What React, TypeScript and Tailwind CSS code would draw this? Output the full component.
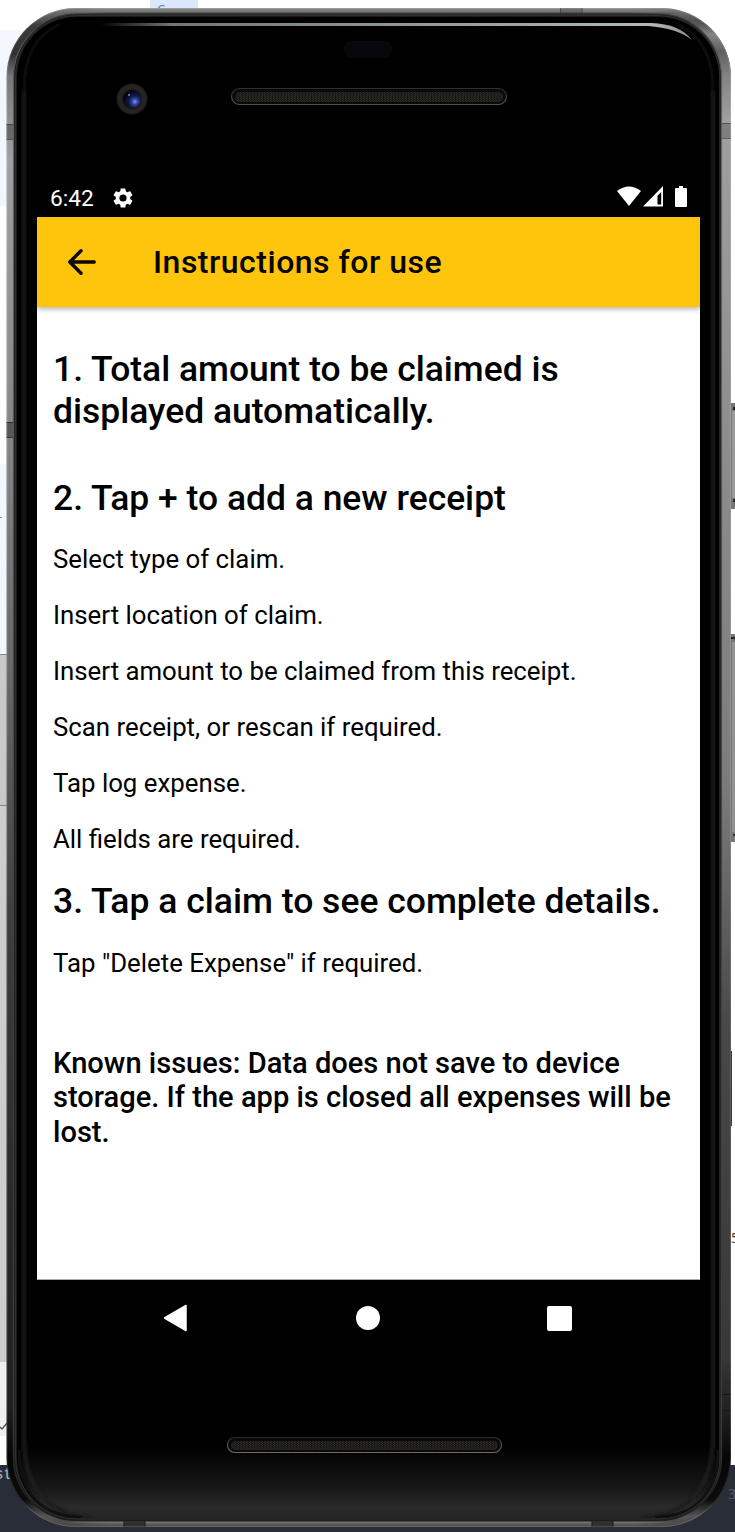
import React from "react";

function Speaker({ x, y, w, h, rim }: { x: number; y: number; w: number; h: number; rim: string }) {
  return (
    <g>
      <rect x={x + 0.5} y={y + 0.5} width={w - 1} height={h - 1} rx={(h - 1) / 2} fill="#0b0a09" stroke={`url(#${rim})`} strokeWidth="1.2" />
      <rect x={x + 4} y={y + 4} width={w - 8} height={h - 7} rx={(h - 7) / 2} fill="url(#mesh)" />
    </g>
  );
}

function PhoneShell() {
  return (
    <svg className="absolute inset-0 h-[1532px] w-[735px]" viewBox="0 0 735 1532" aria-hidden="true">
      <defs>
        <linearGradient id="rail" x1="0" y1="8" x2="0" y2="1527" gradientUnits="userSpaceOnUse">
          <stop offset="0" stopColor="#7b7b7b" />
          <stop offset="0.012" stopColor="#3c3c3c" />
          <stop offset="0.03" stopColor="#303030" />
          <stop offset="0.045" stopColor="#777777" />
          <stop offset="0.07" stopColor="#8c8c8c" />
          <stop offset="0.1" stopColor="#a0a0a0" />
          <stop offset="0.25" stopColor="#8b8b8b" />
          <stop offset="0.45" stopColor="#656565" />
          <stop offset="0.6" stopColor="#3e3e3e" />
          <stop offset="0.8" stopColor="#282828" />
          <stop offset="0.92" stopColor="#202020" />
          <stop offset="0.955" stopColor="#060606" />
          <stop offset="0.982" stopColor="#0c0c0c" />
          <stop offset="0.993" stopColor="#555555" />
          <stop offset="1" stopColor="#444444" />
        </linearGradient>
        <linearGradient id="railRight" x1="0" y1="20" x2="0" y2="1460" gradientUnits="userSpaceOnUse">
          <stop offset="0" stopColor="#8a8a8a" stopOpacity="0" />
          <stop offset="0.01" stopColor="#858585" />
          <stop offset="0.022" stopColor="#606060" />
          <stop offset="0.04" stopColor="#858585" />
          <stop offset="0.07" stopColor="#a0a0a0" />
          <stop offset="0.3" stopColor="#8c8c8c" />
          <stop offset="0.53" stopColor="#7c7c7c" />
          <stop offset="0.7" stopColor="#484848" />
          <stop offset="0.93" stopColor="#383838" />
          <stop offset="1" stopColor="#111111" stopOpacity="0" />
        </linearGradient>
        <linearGradient id="bevel" x1="0" y1="10" x2="0" y2="1525" gradientUnits="userSpaceOnUse">
          <stop offset="0" stopColor="#333333" />
          <stop offset="0.025" stopColor="#555555" />
          <stop offset="0.1" stopColor="#666666" />
          <stop offset="0.4" stopColor="#4c4c4c" />
          <stop offset="0.7" stopColor="#404040" />
          <stop offset="0.93" stopColor="#3c3c3c" />
          <stop offset="1" stopColor="#1b1b1b" />
        </linearGradient>
        <linearGradient id="topRail" x1="0" y1="8" x2="0" y2="18" gradientUnits="userSpaceOnUse">
          <stop offset="0" stopColor="#8d8d87" />
          <stop offset="0.4" stopColor="#73736f" />
          <stop offset="0.55" stopColor="#303030" />
          <stop offset="0.7" stopColor="#555555" />
          <stop offset="1" stopColor="#0c0c0c" />
        </linearGradient>
        <linearGradient id="bottomRail" x1="0" y1="1518" x2="0" y2="1527" gradientUnits="userSpaceOnUse">
          <stop offset="0" stopColor="#090909" />
          <stop offset="0.3" stopColor="#333333" />
          <stop offset="0.5" stopColor="#707070" />
          <stop offset="0.75" stopColor="#555555" />
          <stop offset="1" stopColor="#4a4a4a" />
        </linearGradient>
        <linearGradient id="edgeFade" x1="60" x2="680" gradientUnits="userSpaceOnUse">
          <stop offset="0" stopColor="white" stopOpacity="0" />
          <stop offset="0.08" stopColor="white" />
          <stop offset="0.92" stopColor="white" />
          <stop offset="1" stopColor="white" stopOpacity="0" />
        </linearGradient>
        <mask id="edgeMask" maskUnits="userSpaceOnUse" x="0" y="0" width="735" height="1532"><rect width="735" height="1532" fill="url(#edgeFade)" /></mask>
        <linearGradient id="shine" x1="100" x2="694" gradientUnits="userSpaceOnUse">
          <stop offset="0" stopColor="#6f7678" stopOpacity="0" />
          <stop offset="0.12" stopColor="#6f7678" />
          <stop offset="0.5" stopColor="#8e9698" />
          <stop offset="0.93" stopColor="#b2b8ba" />
          <stop offset="1" stopColor="#878c8e" />
        </linearGradient>
        <linearGradient id="chin" x1="0" y1="1445" x2="0" y2="1518" gradientUnits="userSpaceOnUse">
          <stop offset="0" stopColor="#000000" />
          <stop offset="0.6" stopColor="#181818" />
          <stop offset="0.86" stopColor="#2b2b2b" />
          <stop offset="1" stopColor="#242424" />
        </linearGradient>
        <linearGradient id="rimTop" x1="0" y1="0" x2="0" y2="1"><stop stopColor="#303030" /><stop offset="1" stopColor="#505050" /></linearGradient>
        <linearGradient id="rimBottom" x1="0" y1="0" x2="0" y2="1"><stop stopColor="#2c2c2c" /><stop offset="1" stopColor="#6c6c6c" /></linearGradient>
        <radialGradient id="lens" cx="0.66" cy="0.65" r="0.6">
          <stop offset="0" stopColor="#8496f5" />
          <stop offset="0.25" stopColor="#3749a8" />
          <stop offset="0.55" stopColor="#111b4f" />
          <stop offset="1" stopColor="#05070f" />
        </radialGradient>
        <pattern id="mesh" width="3" height="2" patternUnits="userSpaceOnUse">
          <rect width="3" height="2" fill="#1b1916" />
          <rect width="1" height="1" fill="#332c25" />
          <rect x="1" y="1" width="1" height="1" fill="#2b2b27" />
        </pattern>
        <filter id="soft" x="-10%" y="-10%" width="120%" height="120%"><feGaussianBlur stdDeviation="1.6" /></filter>
        <clipPath id="bodyClip"><rect x="6.5" y="8" width="724.5" height="1519" rx="69" /></clipPath>
        <clipPath id="glassClip"><rect x="18" y="18" width="701" height="1500" rx="60" /></clipPath>
      </defs>
      <rect x="731" y="403" width="4" height="106" fill="#777777" />
      <rect x="732" y="411" width="3" height="87" fill="#9a9a9a" />
      <rect x="733" y="407" width="2" height="3" fill="#222222" />
      <rect x="733" y="499" width="2" height="3" fill="#292929" />
      <rect x="731" y="634" width="4" height="208" fill="#777777" />
      <rect x="731" y="637" width="4" height="2" fill="#222222" />
      <rect x="732" y="642" width="3" height="190" fill="#929292" />
      <rect x="733" y="834" width="2" height="2" fill="#333333" />
      <rect x="730" y="1051" width="2" height="75" fill="#3a3a3a" />
      <rect x="6.5" y="8" width="724.5" height="1519" rx="69" fill="url(#rail)" />
      <g clipPath="url(#bodyClip)">
        <rect x="670" y="20" width="61" height="1440" fill="url(#railRight)" />
        <rect x="60" y="8" width="620" height="10" fill="url(#topRail)" mask="url(#edgeMask)" />
        <rect x="60" y="1518" width="620" height="9" fill="url(#bottomRail)" mask="url(#edgeMask)" />
        <path d="M560.5 8V17M582 8V17" stroke="#333333" strokeOpacity="0.7" />
        <rect x="561" y="8" width="21" height="8" fill="#333333" fillOpacity="0.25" />
        <rect x="6" y="124" width="11" height="15" fill="#333333" fillOpacity="0.45" />
        <path d="M6 124.5H17M6 139.5H17" stroke="#333333" strokeOpacity="0.7" />
        <rect x="720" y="123" width="11" height="15" fill="#444444" fillOpacity="0.35" />
        <path d="M720 123.5H731M720 138.5H731" stroke="#333333" strokeOpacity="0.6" />
        <rect x="6" y="422" width="11" height="15" fill="#222222" fillOpacity="0.45" />
        <path d="M6 422.5H17M6 437.5H17" stroke="#222222" strokeOpacity="0.8" />
        <path d="M720 1394.5H731M720 1410.5H731" stroke="#161616" />
        <rect x="124" y="1519" width="21" height="8" fill="#303030" />
        <path d="M124 1519V1527M145 1519V1527" stroke="#161616" />
        <rect x="592" y="1519" width="21" height="8" fill="#303030" />
        <path d="M592 1519V1527M613 1519V1527" stroke="#161616" />
      </g>
      <rect x="7" y="8.5" width="723.5" height="1518" rx="68.5" fill="none" stroke="#ffffff" strokeOpacity="0.14" />
      <rect x="13.5" y="14" width="708" height="1506.5" rx="63" fill="#1b1b1b" stroke="url(#bevel)" strokeWidth="1.2" />
      <rect x="15.5" y="15.5" width="704.5" height="1503.5" rx="61" fill="none" stroke="#303030" strokeWidth="1" />
      <rect x="17" y="17" width="702" height="1501" rx="60" fill="#000000" />
      <g clipPath="url(#glassClip)">
        <rect x="17" y="1440" width="702" height="80" fill="url(#chin)" />
        <path d="M24 90V1440Q25 1513 93 1518M713 90V1440Q711 1513 642 1518" fill="none" stroke="#1c1c1c" strokeWidth="4" filter="url(#soft)" />
        <path d="M60 24Q24 40 24 90M677 24Q713 40 713 90" fill="none" stroke="#101010" strokeWidth="3" filter="url(#soft)" />
        <path d="M18 1450Q19 1517 82 1518M719 1450Q718 1517 655 1518" fill="none" stroke="#101010" strokeWidth="5" />
      </g>
      <path d="M100 23H651Q680 24 692 40Q677 28 648 26H100Z" fill="url(#shine)" />
      <rect x="344" y="41" width="48" height="17" rx="8" fill="#08080c" />
      <circle cx="132" cy="99" r="15.5" fill="#1d1a1c" />
      <circle cx="132" cy="99" r="12.5" fill="none" stroke="#272325" strokeWidth="4" />
      <circle cx="132" cy="99" r="9" fill="url(#lens)" />
      <circle cx="129" cy="95" r="1" fill="#7788bb" />
      <Speaker x={231} y={88} w={276} h={17} rim="rimTop" />
      <Speaker x={227} y={1437} w={275} h={16} rim="rimBottom" />
    </svg>
  );
}

function Backdrop() {
  return (
    <div className="absolute inset-0 flex justify-between overflow-hidden bg-white font-['Noto_Sans'] text-[13px]">
      <div className="flex w-20 flex-col">
        <div className="h-[30px]" />
        <div className="h-[176px] bg-[#f3f6fc]" />
        <div className="h-[258px]" />
        <div className="h-[190px] bg-[#f3f6fc] pt-[53px]"><div className="h-px w-[2px] bg-[#58a999]" /></div>
        <div className="h-[152px] border-y border-[#888] bg-[#c9c9c9]" />
        <div className="h-[556px] bg-[#cdcdcd]" />
        <div className="h-[74px] bg-[#f0f0f0]">
          <svg className="mt-[60px] h-[10px] w-2" viewBox="0 0 8 10"><path d="M0 5L2 7L8 0" fill="none" stroke="#555" strokeWidth="1.5" /></svg>
        </div>
        <div className="h-[29px]" />
        <div className="h-[67px] bg-[#292d37] font-['Liberation_Mono'] text-[16px] leading-[20px] text-[#aeb6c5]"><span className="-ml-[6px]">st</span></div>
      </div>
      <div className="ml-[70px] mr-auto h-[9px] w-12 overflow-hidden bg-[#dbe8fc] pl-[7px] text-[13px] leading-[19px] text-[#5585d0]">C</div>
      <div className="flex w-20 flex-col">
        <div className="h-[1228px]" />
        <div className="h-[237px] pl-[76px] text-[14px] leading-[19px] text-[#444]">5</div>
        <div className="h-[67px] bg-[#292d37] pl-[73px] pt-[19px] text-[14px] leading-[20px] text-[#4b576e]">3</div>
      </div>
      <div className="absolute bottom-0 left-20 right-20 h-[67px] bg-[#292d37]" />
    </div>
  );
}

function StatusBar() {
  return (
    <div className="flex h-[38px] items-center pl-[13px] pr-[12px] text-white">
      <span className="pt-[2px] text-[22.7px] leading-[36px]">6:42</span>
      <svg className="mb-[1px] ml-[17px] h-[24px] w-[24px]" viewBox="0 0 24 24" fill="currentColor">
        <path d="M19.14 12.94c.04-.3.06-.61.06-.94 0-.32-.02-.64-.07-.94l2.03-1.58a.49.49 0 0 0 .12-.61l-1.92-3.32a.488.488 0 0 0-.59-.22l-2.39.96c-.5-.38-1.03-.7-1.62-.94l-.36-2.54a.484.484 0 0 0-.48-.41h-3.84c-.24 0-.43.17-.47.41l-.36 2.54c-.59.24-1.13.57-1.62.94l-2.39-.96c-.22-.08-.47 0-.59.22L2.74 8.87c-.12.21-.08.47.12.61l2.03 1.58c-.05.3-.09.63-.09.94s.02.64.07.94l-2.03 1.58a.49.49 0 0 0-.12.61l1.92 3.32c.12.22.37.29.59.22l2.39-.96c.5.38 1.03.7 1.62.94l.36 2.54c.05.24.24.41.48.41h3.84c.24 0 .44-.17.47-.41l.36-2.54c.59-.24 1.13-.56 1.62-.94l2.39.96c.22.08.47 0 .59-.22l1.92-3.32c.12-.22.07-.47-.12-.61l-2.01-1.58zM12 15.6A3.6 3.6 0 1 1 12 8.4a3.6 3.6 0 0 1 0 7.2z" />
      </svg>
      <svg className="mb-[3px] ml-auto h-[21px] w-[71px]" viewBox="0 0 71 21" fill="currentColor">
        <path d="M0 5Q12-4 24 5L12 20Z" />
        <path fillRule="evenodd" d="M46 0V20.5H26ZM44.2 6L40.5 9.8V18.5H44.2Z" />
        <path d="M62 0H66V2H69Q70 2 70 3V20Q70 21 69 21H59Q58 21 58 20V3Q58 2 59 2H62Z" />
      </svg>
    </div>
  );
}

const steps = [
  "Select type of claim.",
  "Insert location of claim.",
  "Insert amount to be claimed from this receipt.",
  "Scan receipt, or rescan if required.",
  "Tap log expense.",
  "All fields are required.",
];

export default function App() {
  return (
    <div className="relative isolate h-[1532px] w-[735px] overflow-hidden font-[Roboto,sans-serif]">
      <Backdrop />
      <PhoneShell />
      <div className="relative ml-[37px] flex w-[663px] flex-col pt-[179px]">
        <StatusBar />
        <header className="z-10 flex h-[90px] items-center bg-[#ffc40c] pl-[31px] text-[#080600] shadow-[0_2px_5px_rgba(0,0,0,0.3)]">
          <svg className="h-[26px] w-[28px]" viewBox="0 0 28 26" fill="none" stroke="currentColor" strokeWidth="3.4" strokeLinecap="round" strokeLinejoin="round">
            <path d="M26.2 13H2M13 1.8L1.8 13L13 24.2" />
          </svg>
          <h1 className="ml-[57px] text-[32px] font-medium leading-[40px] tracking-[0.5px]">Instructions for use</h1>
        </header>
        <main className="h-[973px] border-b border-[#aaa] bg-white pl-[16px] pt-[41px] text-black">
          <h2 className="text-[35.45px] font-medium leading-[42.4px]">1. Total amount to be claimed is<br />displayed automatically.</h2>
          <h2 className="mt-[44px] text-[35.45px] font-medium leading-[42px]">2. Tap + to add a new receipt</h2>
          <ul className="mt-[12px] text-[25.8px]">
            {steps.map((step) => <li key={step} className="h-[56px] leading-[56px]">{step}</li>)}
          </ul>
          <h2 className="mt-[13px] text-[35.5px] font-medium leading-[42px]">3. Tap a claim to see complete details.</h2>
          <p className="mt-[13px] text-[25.8px] leading-[56px]">Tap "Delete Expense" if required.</p>
          <p className="mt-[55px] text-[29.07px] font-medium leading-[34.5px]">Known issues: Data does not save to device<br />storage. If the app is closed all expenses will be<br />lost.</p>
        </main>
        <nav className="flex h-[76px] items-center pl-[126px] pr-[128px]">
          <svg className="h-[28px] w-[24px]" viewBox="0 0 24 28"><path d="M1.5 14L23 1.5V26.5Z" fill="white" stroke="white" strokeWidth="1.5" strokeLinejoin="round" /></svg>
          <div className="ml-auto h-[24px] w-[24px] rounded-full bg-white" />
          <div className="ml-[167px] h-[25px] w-[25px] rounded-[2px] bg-white" />
        </nav>
      </div>
    </div>
  );
}
